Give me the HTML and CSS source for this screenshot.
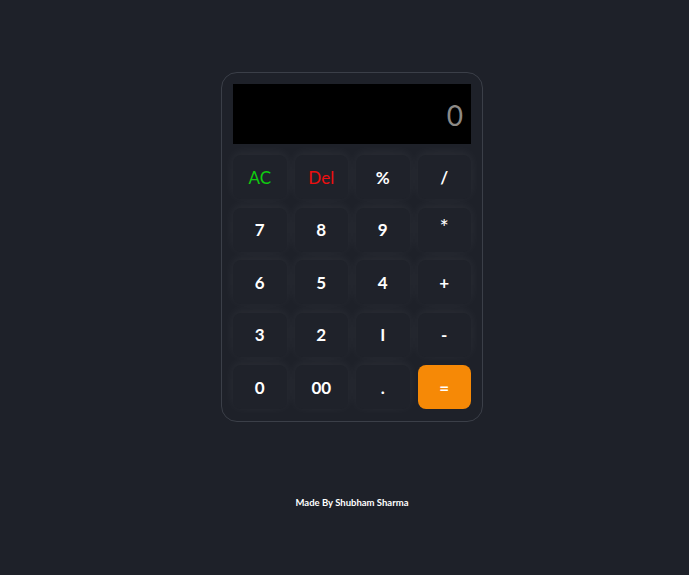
FILE: index.html
```html
<!DOCTYPE html>
<html>
<head>
<meta charset="utf-8">
<link rel="stylesheet" href="styles.css">
</head>
<body>
<main class="page">
  <div class="calc">
    <div class="display">0</div>
    <div class="keys">
      <button class="key ac">AC</button>
      <button class="key del">Del</button>
      <button class="key">%</button>
      <button class="key">/</button>
      <button class="key">7</button>
      <button class="key">8</button>
      <button class="key">9</button>
      <button class="key star">*</button>
      <button class="key">6</button>
      <button class="key">5</button>
      <button class="key">4</button>
      <button class="key">+</button>
      <button class="key">3</button>
      <button class="key">2</button>
      <button class="key">I</button>
      <button class="key">-</button>
      <button class="key">0</button>
      <button class="key">00</button>
      <button class="key">.</button>
      <button class="key eq">=</button>
    </div>
  </div>
  <p class="credit">Made By Shubham Sharma</p>
</main>
</body>
</html>
```
FILE: styles.css
```css
html, body {
  margin: 0;
  padding: 0;
  background: #1e2129;
  height: 100%;
}
.page {
  display: flex;
  flex-direction: column;
  align-items: center;
  padding: 72px 0 0 15px;
  font-family: "Lato", "Open Sans", sans-serif;
}
.calc {
  width: 238px;
  padding: 11px 11px 12px;
  border: 1px solid #3b3f48;
  border-radius: 16px;
  background: #1e2129;
}
.display {
  height: 60px;
  background: #000;
  color: #8d8a86;
  font-size: 28px;
  text-align: right;
  line-height: 62px;
  padding-right: 8px;
  box-sizing: border-box;
}
.keys {
  margin-top: 11px;
  display: grid;
  grid-template-columns: repeat(4, 1fr);
  grid-auto-rows: 44px;
  column-gap: 8px;
  row-gap: 8.5px;
}
.key {
  border: none;
  border-radius: 8px;
  background: #1f222a;
  color: #fff;
  font-family: "Lato", "Open Sans", sans-serif;
  font-size: 17px;
  font-weight: 700;
  box-shadow: 0 -2px 12px rgba(255, 255, 255, 0.06);
  padding: 0;
}
.key.star { font-size: 22px; padding-bottom: 6px; font-weight: 400; }
.key.ac { color: #0fcc0f; font-weight: 400; }
.key.del { color: #ee0f0f; font-weight: 400; }
.key.eq {
  background: #f68906;
  box-shadow: none;
}
.credit {
  margin: 75px 0 0;
  color: #fff;
  font-size: 9.5px;
  font-weight: 700;
}
```
